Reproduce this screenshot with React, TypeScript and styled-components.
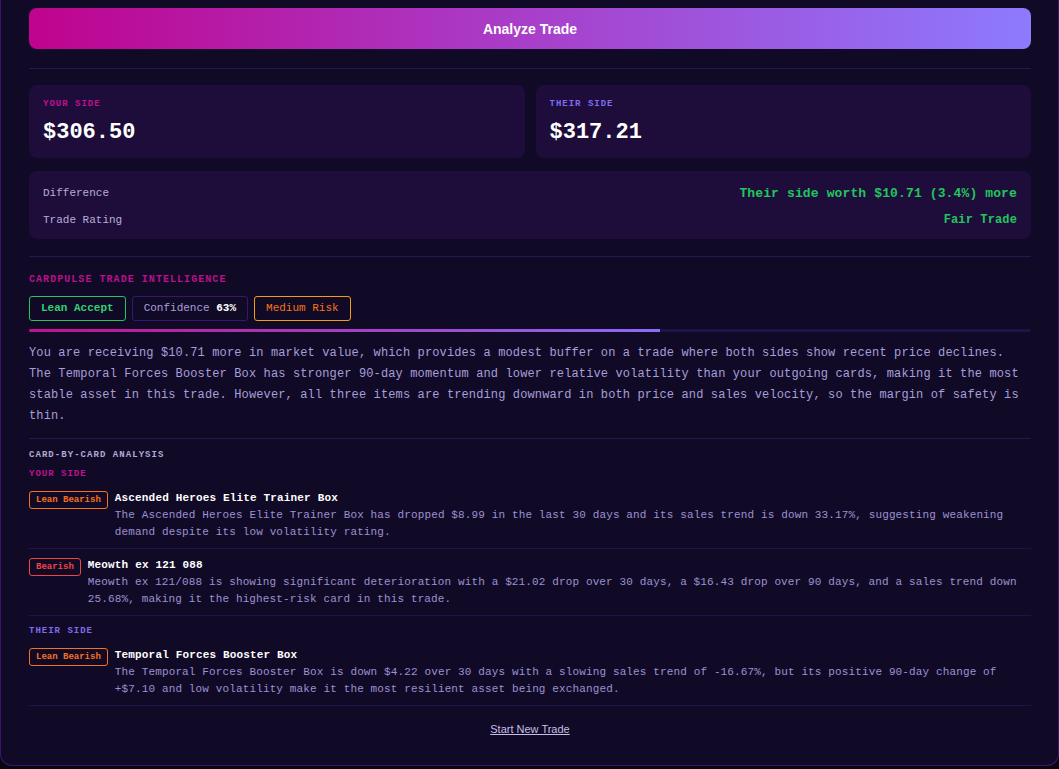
import React, { FC } from "react";
import styled, { createGlobalStyle } from "styled-components";

const GlobalStyle = createGlobalStyle`
  html, body {
    margin: 0;
    padding: 0;
    background: #0a0610;
  }
  * {
    box-sizing: border-box;
  }
`;

const MONO = `"Liberation Mono", "DejaVu Sans Mono", monospace`;
const SANS = `"Liberation Sans", Arial, sans-serif`;

const Panel = styled.div`
  width: 1059px;
  background: #110a27;
  border: 1px solid #3a1670;
  border-top: none;
  border-radius: 0 0 12px 12px;
  padding: 8px 27px 29px 28px;
  display: flex;
  flex-direction: column;
  font-family: ${MONO};
`;

const AnalyzeButton = styled.button`
  height: 41px;
  width: 100%;
  border: none;
  border-radius: 8px;
  background: linear-gradient(90deg, #bf038e 0%, #a83fca 50%, #8d7afe 100%);
  color: #fff;
  font-family: ${SANS};
  font-weight: 700;
  font-size: 14px;
  cursor: pointer;
`;

const Divider = styled.div<{ $top: number; $bottom?: number }>`
  height: 1px;
  background: #2a1656;
  margin-top: ${(p) => p.$top}px;
  margin-bottom: ${(p) => p.$bottom ?? 0}px;
`;

const SidesGrid = styled.div`
  display: grid;
  grid-template-columns: 1fr 1fr;
  gap: 11px;
`;

const Card = styled.div`
  background: #1e0d3b;
  border-radius: 8px;
`;

const SideCard = styled(Card)`
  padding: 13px 14px 11px;
  display: flex;
  flex-direction: column;
  gap: 9px;
`;

const SideLabel = styled.div<{ $color: string }>`
  font-size: 9px;
  line-height: 12px;
  font-weight: 700;
  letter-spacing: 1px;
  text-transform: uppercase;
  color: ${(p) => p.$color};
`;

const Price = styled.div`
  font-size: 22px;
  line-height: 28px;
  font-weight: 700;
  color: #fff;
`;

const SummaryCard = styled(Card)`
  margin-top: 13px;
  padding: 12px 14px 9px;
  display: flex;
  flex-direction: column;
  gap: 7px;
`;

const SummaryRow = styled.div`
  display: flex;
  justify-content: space-between;
  align-items: center;
  height: 20px;
`;

const SummaryKey = styled.span`
  font-size: 11px;
  color: #b6aed8;
`;

const SummaryValue = styled.span<{ $size: number }>`
  font-size: ${(p) => p.$size}px;
  font-weight: 700;
  letter-spacing: 0.13px;
  color: #22c55e;
`;

const SectionTitle = styled.div`
  margin-top: 16px;
  font-size: 10px;
  line-height: 14px;
  font-weight: 700;
  letter-spacing: 1.05px;
  color: #b8118a;
`;

const BadgeRow = styled.div`
  display: flex;
  gap: 6px;
  margin-top: 9px;
`;

const Badge = styled.span<{ $color: string; $border: string; $bold?: boolean }>`
  display: inline-block;
  font-size: 11px;
  line-height: 16px;
  padding: 3px 11px 4px;
  border: 1px solid ${(p) => p.$border};
  border-radius: 3px;
  color: ${(p) => p.$color};
  font-weight: ${(p) => (p.$bold ? 700 : 400)};

  b {
    color: #fff;
  }
`;

const Track = styled.div`
  margin-top: 8px;
  height: 3px;
  background: #23114a;
  border-radius: 2px;
  overflow: hidden;
`;

const Fill = styled.div`
  height: 100%;
  background: linear-gradient(90deg, #c0128c 0%, #8b6cf6 100%);
`;

const Summary = styled.p`
  margin: 11px 0 0;
  font-size: 12px;
  line-height: 21px;
  letter-spacing: 0.13px;
  color: #a79fd8;
`;

const AnalysisTitle = styled.div`
  margin-top: 10px;
  font-size: 9px;
  line-height: 12px;
  font-weight: 700;
  letter-spacing: 1.05px;
  color: #b3abd0;
`;

const SideGroup = styled.div<{ $top: number }>`
  margin-top: ${(p) => p.$top}px;
  display: flex;
  flex-direction: column;
`;

const GroupLabel = styled(SideLabel)`
  margin-bottom: 2px;
`;

const ItemRow = styled.div`
  display: flex;
  align-items: flex-start;
  gap: 7px;
  padding: 9px 0 7px;
  border-bottom: 1px solid #22114a;
`;

const Tag = styled.span<{ $color: string }>`
  flex: none;
  font-size: 9px;
  line-height: 12px;
  font-weight: 700;
  padding: 2px 6px;
  border: 1px solid ${(p) => p.$color};
  border-radius: 3px;
  color: ${(p) => p.$color};
`;

const ItemBody = styled.div`
  display: flex;
  flex-direction: column;
  gap: 2px;
`;

const ItemName = styled.div`
  font-size: 11px;
  line-height: 14px;
  font-weight: 700;
  letter-spacing: 0.16px;
  color: #fff;
`;

const ItemText = styled.div`
  font-size: 11px;
  line-height: 17px;
  letter-spacing: 0.13px;
  color: #9c92cf;
`;

const ResetLink = styled.a`
  align-self: center;
  margin-top: 16px;
  font-family: ${SANS};
  font-size: 11px;
  line-height: 14px;
  color: #c7bfe6;
  text-decoration: underline;
  cursor: pointer;
`;

interface Item {
  tag: string;
  tagColor: string;
  name: string;
  text: string;
}

const yourItems: Item[] = [
  {
    tag: "Lean Bearish",
    tagColor: "#f6711c",
    name: "Ascended Heroes Elite Trainer Box",
    text: "The Ascended Heroes Elite Trainer Box has dropped $8.99 in the last 30 days and its sales trend is down 33.17%, suggesting weakening demand despite its low volatility rating.",
  },
  {
    tag: "Bearish",
    tagColor: "#ee4444",
    name: "Meowth ex 121 088",
    text: "Meowth ex 121/088 is showing significant deterioration with a $21.02 drop over 30 days, a $16.43 drop over 90 days, and a sales trend down 25.68%, making it the highest-risk card in this trade.",
  },
];

const theirItems: Item[] = [
  {
    tag: "Lean Bearish",
    tagColor: "#f6711c",
    name: "Temporal Forces Booster Box",
    text: "The Temporal Forces Booster Box is down $4.22 over 30 days with a slowing sales trend of -16.67%, but its positive 90-day change of +$7.10 and low volatility make it the most resilient asset being exchanged.",
  },
];

const ItemList: FC<{ items: Item[] }> = ({ items }) => (
  <>
    {items.map((item) => (
      <ItemRow key={item.name}>
        <Tag $color={item.tagColor}>{item.tag}</Tag>
        <ItemBody>
          <ItemName>{item.name}</ItemName>
          <ItemText>{item.text}</ItemText>
        </ItemBody>
      </ItemRow>
    ))}
  </>
);

const confidence = 63;

const App: FC = () => {
  return (
    <>
      <GlobalStyle />
      <Panel>
        <AnalyzeButton>Analyze Trade</AnalyzeButton>
        <Divider $top={19} $bottom={16} />

        <SidesGrid>
          <SideCard>
            <SideLabel $color="#c0128c">Your Side</SideLabel>
            <Price>$306.50</Price>
          </SideCard>
          <SideCard>
            <SideLabel $color="#7f6cf2">Their Side</SideLabel>
            <Price>$317.21</Price>
          </SideCard>
        </SidesGrid>

        <SummaryCard>
          <SummaryRow>
            <SummaryKey>Difference</SummaryKey>
            <SummaryValue $size={13}>Their side worth $10.71 (3.4%) more</SummaryValue>
          </SummaryRow>
          <SummaryRow>
            <SummaryKey>Trade Rating</SummaryKey>
            <SummaryValue $size={12}>Fair Trade</SummaryValue>
          </SummaryRow>
        </SummaryCard>

        <Divider $top={17} />

        <SectionTitle>CARDPULSE TRADE INTELLIGENCE</SectionTitle>
        <BadgeRow>
          <Badge $color="#2fd170" $border="#22c55e" $bold>
            Lean Accept
          </Badge>
          <Badge $color="#a79fd8" $border="#3a1670">
            Confidence <b>{confidence}%</b>
          </Badge>
          <Badge $color="#f97316" $border="#f59e0b">
            Medium Risk
          </Badge>
        </BadgeRow>
        <Track>
          <Fill style={{ width: `${confidence}%` }} />
        </Track>
        <Summary>
          You are receiving $10.71 more in market value, which provides a modest buffer on a trade
          where both sides show recent price declines. The Temporal Forces Booster Box has stronger
          90-day momentum and lower relative volatility than your outgoing cards, making it the most
          stable asset in this trade. However, all three items are trending downward in both price
          and sales velocity, so the margin of safety is thin.
        </Summary>

        <Divider $top={11} />

        <AnalysisTitle>CARD-BY-CARD ANALYSIS</AnalysisTitle>
        <SideGroup $top={7}>
          <GroupLabel $color="#c0128c">Your Side</GroupLabel>
          <ItemList items={yourItems} />
        </SideGroup>
        <SideGroup $top={9}>
          <GroupLabel $color="#7f6cf2">Their Side</GroupLabel>
          <ItemList items={theirItems} />
        </SideGroup>

        <ResetLink>Start New Trade</ResetLink>
      </Panel>
    </>
  );
};

export default App;
